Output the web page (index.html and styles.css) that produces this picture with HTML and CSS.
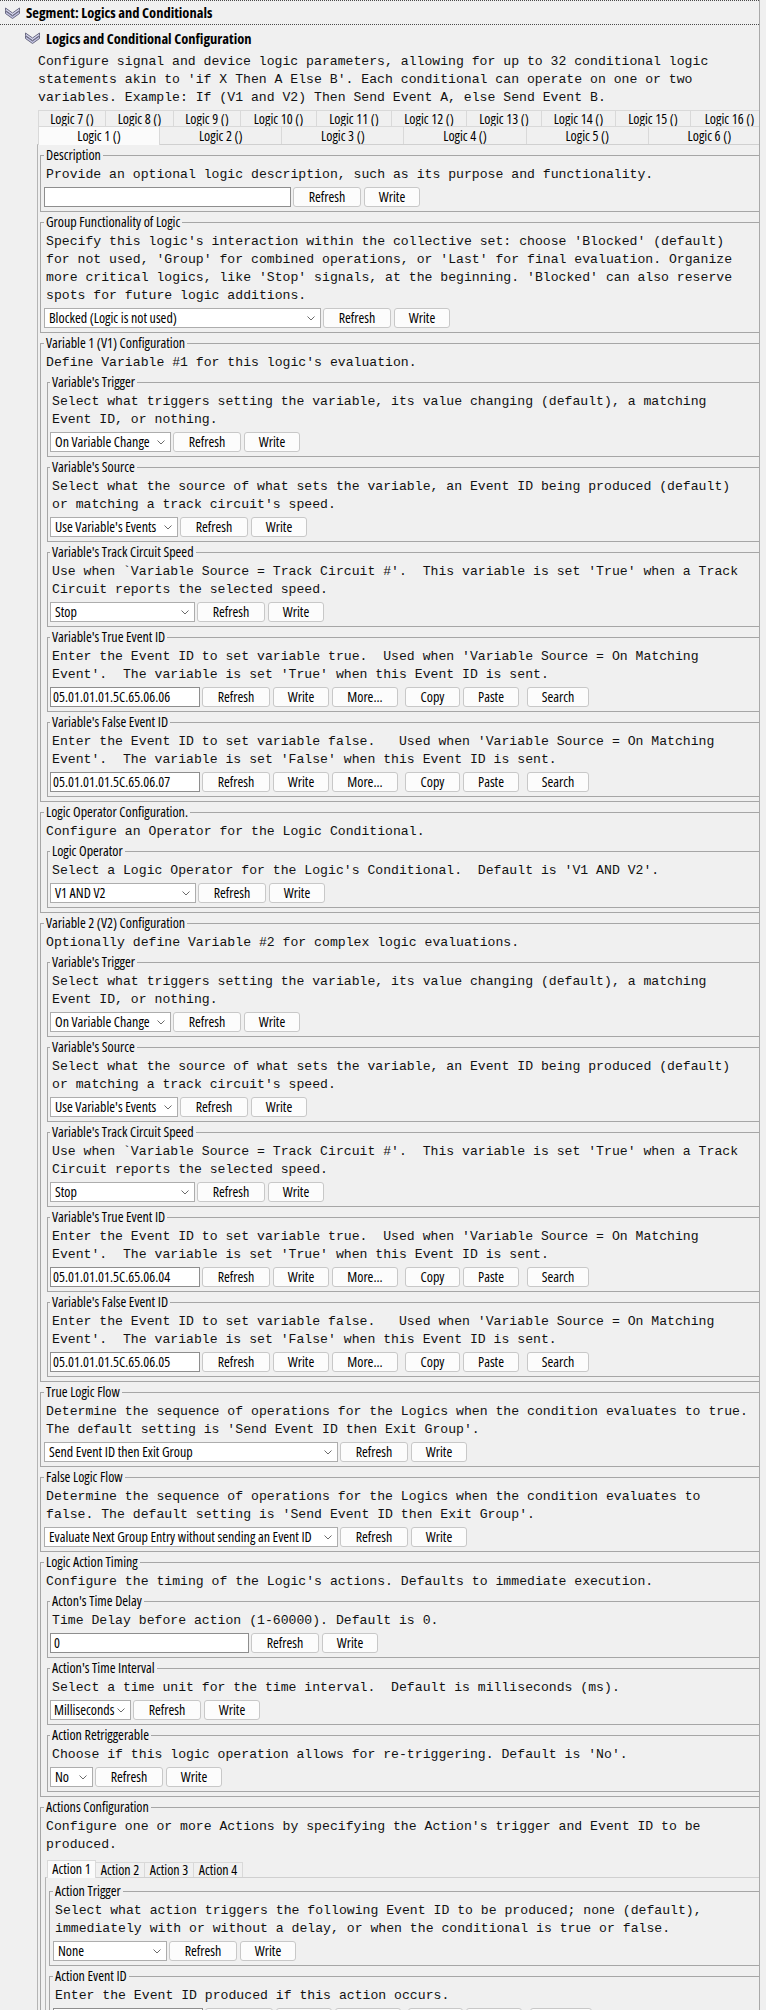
FILE: index.html
```html
<!DOCTYPE html>
<html>
<head>
<meta charset="utf-8">
<link rel="stylesheet" href="styles.css">
</head>
<body>
<div class="viewport">
  <div class="seg-head">
    <svg class="chev" width="17" height="12" viewBox="0 0 17 12"><path d="M1.5 1 L8.5 6 L15.5 1 L15.5 3.5 L8.5 8.5 L1.5 3.5Z" fill="#d6d6ee" stroke="#6a6a82" stroke-width="1" stroke-linejoin="round"/><path d="M1.5 4 L8.5 9 L15.5 4 L15.5 6.5 L8.5 11.5 L1.5 6.5Z" fill="#c4c4e4" stroke="#6a6a82" stroke-width="1" stroke-linejoin="round"/></svg>
    <span>Segment: Logics and Conditionals</span>
  </div>
  <div class="sub-head">
    <svg class="chev" width="17" height="12" viewBox="0 0 17 12"><path d="M1.5 1 L8.5 6 L15.5 1 L15.5 3.5 L8.5 8.5 L1.5 3.5Z" fill="#d6d6ee" stroke="#6a6a82" stroke-width="1" stroke-linejoin="round"/><path d="M1.5 4 L8.5 9 L15.5 4 L15.5 6.5 L8.5 11.5 L1.5 6.5Z" fill="#c4c4e4" stroke="#6a6a82" stroke-width="1" stroke-linejoin="round"/></svg>
    <span>Logics and Conditional Configuration</span>
  </div>
  <div class="txt intro">Configure signal and device logic parameters, allowing for up to 32 conditional logic
statements akin to 'if X Then A Else B'. Each conditional can operate on one or two
variables. Example: If (V1 and V2) Then Send Event A, else Send Event B.</div>

  <div class="tabpane">
    <div class="tabs-back">
      <div class="tab">Logic 7 ()</div><div class="tab">Logic 8 ()</div><div class="tab">Logic 9 ()</div><div class="tab">Logic 10 ()</div><div class="tab">Logic 11 ()</div><div class="tab">Logic 12 ()</div><div class="tab">Logic 13 ()</div><div class="tab">Logic 14 ()</div><div class="tab">Logic 15 ()</div><div class="tab">Logic 16 ()</div>
    </div>
    <div class="tabs-front">
      <div class="tab sel">Logic 1 ()</div><div class="tab">Logic 2 ()</div><div class="tab">Logic 3 ()</div><div class="tab">Logic 4 ()</div><div class="tab">Logic 5 ()</div><div class="tab">Logic 6 ()</div>
    </div>
    <div class="panel">

      <fieldset class="grp">
        <legend>Description</legend>
        <div class="txt">Provide an optional logic description, such as its purpose and functionality.</div>
        <div class="row"><div class="field w-desc"></div><div class="btn refresh">Refresh</div><div class="btn write">Write</div></div>
      </fieldset>

      <fieldset class="grp">
        <legend>Group Functionality of Logic</legend>
        <div class="txt">Specify this logic's interaction within the collective set: choose 'Blocked' (default)
for not used, 'Group' for combined operations, or 'Last' for final evaluation. Organize
more critical logics, like 'Stop' signals, at the beginning. 'Blocked' can also reserve
spots for future logic additions.</div>
        <div class="row"><div class="combo w-group"><span>Blocked (Logic is not used)</span><svg class="arr" width="8" height="5" viewBox="0 0 8 5"><path d="M0.5 0.5 L4 4 L7.5 0.5" fill="none" stroke="#6b6b6b"/></svg></div><div class="btn refresh">Refresh</div><div class="btn write">Write</div></div>
      </fieldset>

      <fieldset class="grp">
        <legend>Variable 1 (V1) Configuration</legend>
        <div class="txt">Define Variable #1 for this logic's evaluation.</div>
        <fieldset class="grp in">
          <legend>Variable's Trigger</legend>
          <div class="txt">Select what triggers setting the variable, its value changing (default), a matching
Event ID, or nothing.</div>
          <div class="row"><div class="combo w-trig"><span>On Variable Change</span><svg class="arr" width="8" height="5" viewBox="0 0 8 5"><path d="M0.5 0.5 L4 4 L7.5 0.5" fill="none" stroke="#6b6b6b"/></svg></div><div class="btn refresh">Refresh</div><div class="btn write">Write</div></div>
        </fieldset>
        <fieldset class="grp in">
          <legend>Variable's Source</legend>
          <div class="txt">Select what the source of what sets the variable, an Event ID being produced (default)
or matching a track circuit's speed.</div>
          <div class="row"><div class="combo w-src"><span>Use Variable's Events</span><svg class="arr" width="8" height="5" viewBox="0 0 8 5"><path d="M0.5 0.5 L4 4 L7.5 0.5" fill="none" stroke="#6b6b6b"/></svg></div><div class="btn refresh">Refresh</div><div class="btn write">Write</div></div>
        </fieldset>
        <fieldset class="grp in">
          <legend>Variable's Track Circuit Speed</legend>
          <div class="txt">Use when `Variable Source = Track Circuit #'.  This variable is set 'True' when a Track
Circuit reports the selected speed.</div>
          <div class="row"><div class="combo w-speed"><span>Stop</span><svg class="arr" width="8" height="5" viewBox="0 0 8 5"><path d="M0.5 0.5 L4 4 L7.5 0.5" fill="none" stroke="#6b6b6b"/></svg></div><div class="btn refresh">Refresh</div><div class="btn write">Write</div></div>
        </fieldset>
        <fieldset class="grp in">
          <legend>Variable's True Event ID</legend>
          <div class="txt">Enter the Event ID to set variable true.  Used when 'Variable Source = On Matching
Event'.  The variable is set 'True' when this Event ID is sent.</div>
          <div class="row"><div class="field w-id">05.01.01.01.5C.65.06.06</div><div class="btn refresh">Refresh</div><div class="btn write">Write</div><div class="btn more">More...</div><div class="btn copy">Copy</div><div class="btn paste">Paste</div><div class="btn search">Search</div></div>
        </fieldset>
        <fieldset class="grp in">
          <legend>Variable's False Event ID</legend>
          <div class="txt">Enter the Event ID to set variable false.   Used when 'Variable Source = On Matching
Event'.  The variable is set 'False' when this Event ID is sent.</div>
          <div class="row"><div class="field w-id">05.01.01.01.5C.65.06.07</div><div class="btn refresh">Refresh</div><div class="btn write">Write</div><div class="btn more">More...</div><div class="btn copy">Copy</div><div class="btn paste">Paste</div><div class="btn search">Search</div></div>
        </fieldset>
      </fieldset>

      <fieldset class="grp">
        <legend>Logic Operator Configuration.</legend>
        <div class="txt">Configure an Operator for the Logic Conditional.</div>
        <fieldset class="grp in">
          <legend>Logic Operator</legend>
          <div class="txt">Select a Logic Operator for the Logic's Conditional.  Default is 'V1 AND V2'.</div>
          <div class="row"><div class="combo w-op"><span>V1 AND V2</span><svg class="arr" width="8" height="5" viewBox="0 0 8 5"><path d="M0.5 0.5 L4 4 L7.5 0.5" fill="none" stroke="#6b6b6b"/></svg></div><div class="btn refresh">Refresh</div><div class="btn write">Write</div></div>
        </fieldset>
      </fieldset>

      <fieldset class="grp">
        <legend>Variable 2 (V2) Configuration</legend>
        <div class="txt">Optionally define Variable #2 for complex logic evaluations.</div>
        <fieldset class="grp in">
          <legend>Variable's Trigger</legend>
          <div class="txt">Select what triggers setting the variable, its value changing (default), a matching
Event ID, or nothing.</div>
          <div class="row"><div class="combo w-trig"><span>On Variable Change</span><svg class="arr" width="8" height="5" viewBox="0 0 8 5"><path d="M0.5 0.5 L4 4 L7.5 0.5" fill="none" stroke="#6b6b6b"/></svg></div><div class="btn refresh">Refresh</div><div class="btn write">Write</div></div>
        </fieldset>
        <fieldset class="grp in">
          <legend>Variable's Source</legend>
          <div class="txt">Select what the source of what sets the variable, an Event ID being produced (default)
or matching a track circuit's speed.</div>
          <div class="row"><div class="combo w-src"><span>Use Variable's Events</span><svg class="arr" width="8" height="5" viewBox="0 0 8 5"><path d="M0.5 0.5 L4 4 L7.5 0.5" fill="none" stroke="#6b6b6b"/></svg></div><div class="btn refresh">Refresh</div><div class="btn write">Write</div></div>
        </fieldset>
        <fieldset class="grp in">
          <legend>Variable's Track Circuit Speed</legend>
          <div class="txt">Use when `Variable Source = Track Circuit #'.  This variable is set 'True' when a Track
Circuit reports the selected speed.</div>
          <div class="row"><div class="combo w-speed"><span>Stop</span><svg class="arr" width="8" height="5" viewBox="0 0 8 5"><path d="M0.5 0.5 L4 4 L7.5 0.5" fill="none" stroke="#6b6b6b"/></svg></div><div class="btn refresh">Refresh</div><div class="btn write">Write</div></div>
        </fieldset>
        <fieldset class="grp in">
          <legend>Variable's True Event ID</legend>
          <div class="txt">Enter the Event ID to set variable true.  Used when 'Variable Source = On Matching
Event'.  The variable is set 'True' when this Event ID is sent.</div>
          <div class="row"><div class="field w-id">05.01.01.01.5C.65.06.04</div><div class="btn refresh">Refresh</div><div class="btn write">Write</div><div class="btn more">More...</div><div class="btn copy">Copy</div><div class="btn paste">Paste</div><div class="btn search">Search</div></div>
        </fieldset>
        <fieldset class="grp in">
          <legend>Variable's False Event ID</legend>
          <div class="txt">Enter the Event ID to set variable false.   Used when 'Variable Source = On Matching
Event'.  The variable is set 'False' when this Event ID is sent.</div>
          <div class="row"><div class="field w-id">05.01.01.01.5C.65.06.05</div><div class="btn refresh">Refresh</div><div class="btn write">Write</div><div class="btn more">More...</div><div class="btn copy">Copy</div><div class="btn paste">Paste</div><div class="btn search">Search</div></div>
        </fieldset>
      </fieldset>

      <fieldset class="grp">
        <legend>True Logic Flow</legend>
        <div class="txt">Determine the sequence of operations for the Logics when the condition evaluates to true.
The default setting is 'Send Event ID then Exit Group'.</div>
        <div class="row"><div class="combo w-flow"><span>Send Event ID then Exit Group</span><svg class="arr" width="8" height="5" viewBox="0 0 8 5"><path d="M0.5 0.5 L4 4 L7.5 0.5" fill="none" stroke="#6b6b6b"/></svg></div><div class="btn refresh">Refresh</div><div class="btn write">Write</div></div>
      </fieldset>

      <fieldset class="grp">
        <legend>False Logic Flow</legend>
        <div class="txt">Determine the sequence of operations for the Logics when the condition evaluates to
false. The default setting is 'Send Event ID then Exit Group'.</div>
        <div class="row"><div class="combo w-flow"><span>Evaluate Next Group Entry without sending an Event ID</span><svg class="arr" width="8" height="5" viewBox="0 0 8 5"><path d="M0.5 0.5 L4 4 L7.5 0.5" fill="none" stroke="#6b6b6b"/></svg></div><div class="btn refresh">Refresh</div><div class="btn write">Write</div></div>
      </fieldset>

      <fieldset class="grp">
        <legend>Logic Action Timing</legend>
        <div class="txt">Configure the timing of the Logic's actions. Defaults to immediate execution.</div>
        <fieldset class="grp in">
          <legend>Acton's Time Delay</legend>
          <div class="txt">Time Delay before action (1-60000). Default is 0.</div>
          <div class="row"><div class="field w-delay">0</div><div class="btn refresh">Refresh</div><div class="btn write">Write</div></div>
        </fieldset>
        <fieldset class="grp in">
          <legend>Action's Time Interval</legend>
          <div class="txt">Select a time unit for the time interval.  Default is milliseconds (ms).</div>
          <div class="row"><div class="combo w-unit"><span>Milliseconds</span><svg class="arr" width="8" height="5" viewBox="0 0 8 5"><path d="M0.5 0.5 L4 4 L7.5 0.5" fill="none" stroke="#6b6b6b"/></svg></div><div class="btn refresh">Refresh</div><div class="btn write">Write</div></div>
        </fieldset>
        <fieldset class="grp in">
          <legend>Action Retriggerable</legend>
          <div class="txt">Choose if this logic operation allows for re-triggering. Default is 'No'.</div>
          <div class="row"><div class="combo w-no"><span>No</span><svg class="arr" width="8" height="5" viewBox="0 0 8 5"><path d="M0.5 0.5 L4 4 L7.5 0.5" fill="none" stroke="#6b6b6b"/></svg></div><div class="btn refresh">Refresh</div><div class="btn write">Write</div></div>
        </fieldset>
      </fieldset>

      <fieldset class="grp">
        <legend>Actions Configuration</legend>
        <div class="txt">Configure one or more Actions by specifying the Action's trigger and Event ID to be
produced.</div>
        <div class="subpane">
          <div class="subtabs">
            <div class="stab sel">Action 1</div><div class="stab">Action 2</div><div class="stab">Action 3</div><div class="stab">Action 4</div>
          </div>
          <div class="subpanel">
            <fieldset class="grp in act">
              <legend>Action Trigger</legend>
              <div class="txt">Select what action triggers the following Event ID to be produced; none (default),
immediately with or without a delay, or when the conditional is true or false.</div>
              <div class="row"><div class="combo w-act"><span>None</span><svg class="arr" width="8" height="5" viewBox="0 0 8 5"><path d="M0.5 0.5 L4 4 L7.5 0.5" fill="none" stroke="#6b6b6b"/></svg></div><div class="btn refresh">Refresh</div><div class="btn write">Write</div></div>
            </fieldset>
            <fieldset class="grp in act">
              <legend>Action Event ID</legend>
              <div class="txt">Enter the Event ID produced if this action occurs.</div>
              <div class="row"><div class="field w-id">05.01.01.01.5C.65.06.08</div><div class="btn refresh">Refresh</div><div class="btn write">Write</div><div class="btn more">More...</div><div class="btn copy">Copy</div><div class="btn paste">Paste</div><div class="btn search">Search</div></div>
            </fieldset>
          </div>
        </div>
      </fieldset>

    </div>
  </div>
</div>
</body>
</html>
```
FILE: styles.css
```css
* { box-sizing: border-box; }
html, body { margin: 0; padding: 0; background: #f0f0f0; }
body {
  width: 766px;
  height: 2010px;
  overflow: hidden;
  font-family: "Open Sans", "Liberation Sans", sans-serif;
  font-stretch: 75%;
  font-size: 14px;
  color: #000;
}
.viewport {
  width: 760px;
  height: 2010px;
  overflow: hidden;
  border-right: 1px solid #a9a9a9;
}
.seg-head {
  height: 25px;
  border-top: 1px dotted #4a4a4a;
  border-bottom: 1px dotted #4a4a4a;
  display: flex;
  align-items: center;
  padding-left: 4px;
  font-weight: bold;
  font-size: 14.5px;
}
.sub-head {
  height: 26px;
  display: flex;
  align-items: center;
  padding-left: 24px;
  font-weight: bold;
  font-size: 14.5px;
}
.chev { margin-right: 5px; flex: none; }

.txt {
  font-family: "Liberation Mono", "Courier New", monospace;
  font-stretch: normal;
  font-size: 13.15px;
  line-height: 18px;
  white-space: pre;
  padding-left: 2px;
  color: #111;
}
.intro { margin-top: 2px; padding-left: 38px; }

/* main tabbed pane */
.tabpane {
  margin-left: 37px;
  margin-top: 3px;
  width: 734px;
}
.tabs-back {
  display: grid;
  grid-template-columns: 68px 68px 67px 76px 75px 75px 75px 74px 75px 78px;
  height: 16px;
  margin-left: 1px;
}
.tabs-front {
  display: grid;
  grid-template-columns: repeat(6, 1fr);
  height: 18px;
  margin-left: 1px;
  align-items: end;
}
.tab {
  border-top: 1px solid #d9d9d9;
  border-right: 1px solid #d9d9d9;
  display: flex;
  align-items: center;
  justify-content: center;
  height: 100%;
  background: #f0f0f0;
  line-height: 14px;
  white-space: nowrap;
}
.tab:first-child { border-left: 1px solid #d9d9d9; }
.tabs-front .tab { height: 18px; }
.tabs-front .tab.sel {
  background: #fbfbfb;
  height: 19px;
  margin-bottom: -1px;
  position: relative;
  z-index: 1;
  padding-bottom: 1px;
}
.panel {
  border-top: 1px solid #d0d0d0;
  border-left: 1px solid #b4b4b4;
  padding: 3px 0 0 2px;
}

/* titled borders */
.grp {
  margin: 3px 0 0 0;
  padding: 4px 0 4px 3px;
  border: 1px solid #a6a6a6;
  min-width: 0;
}
.panel > .grp:first-child { margin-top: 0; }
.grp > legend {
  font-size: 14px;
  line-height: 14px;
  height: 14px;
  padding: 0 2px;
  margin-left: 0;
  color: #000;
  white-space: nowrap;
}
.grp.in { margin-left: 3px; padding-left: 2px; }
.grp.act { margin-left: 0; padding-left: 3px; }

/* controls */
.row {
  display: flex;
  height: 20px;
  margin-top: 3px;
}
.field, .combo, .btn {
  height: 20px;
  flex: none;
  display: flex;
  align-items: center;
  font-size: 14px;
  line-height: 18px;
  white-space: nowrap;
}
.field {
  background: #fff;
  border: 1px solid #8e8e8e;
  padding-left: 2px;
}
.combo {
  background: #fff;
  border: 1px solid #adadad;
  padding-left: 4px;
}
.combo span { flex: 1; white-space: nowrap; }
.combo .arr { flex: none; margin: 0 5px 0 2px; }
.btn {
  justify-content: center;
  background: #fcfcfc;
  border: 1px solid #c8c8c8;
  border-radius: 3px;
}
.refresh { width: 68px; margin-left: 2px; }
.write { width: 56px; margin-left: 3px; }
.more { width: 66px; margin-left: 3px; }
.copy { width: 55px; margin-left: 7px; }
.paste { width: 56px; margin-left: 3px; }
.search { width: 62px; margin-left: 8px; }

.w-desc { width: 247px; }
.w-group { width: 277px; }
.w-trig { width: 121px; }
.w-src { width: 128px; }
.w-speed { width: 145px; }
.w-id { width: 150px; }
.w-op { width: 146px; }
.w-flow { width: 294px; }
.w-delay { width: 199px; padding-left: 3px; }
.w-unit { width: 81px; padding-left: 3px; }
.w-no { width: 43px; }
.w-act { width: 114px; }

/* action sub-tabs */
.subpane { margin-top: 6px; margin-left: 1px; }
.subtabs {
  display: flex;
  align-items: flex-end;
  height: 17px;
  padding-left: 2px;
}
.stab {
  width: 49px;
  height: 15px;
  border-top: 1px solid #d9d9d9;
  border-right: 1px solid #d9d9d9;
  display: flex;
  align-items: center;
  justify-content: center;
  line-height: 14px;
  white-space: nowrap;
}
.stab:first-child { border-left: 1px solid #d9d9d9; }
.stab.sel {
  height: 18px;
  margin-bottom: -1px;
  background: #fbfbfb;
  position: relative;
  z-index: 1;
  padding-bottom: 2px;
}
.subpanel {
  border-top: 1px solid #d0d0d0;
  border-left: 1px solid #b4b4b4;
  padding: 3px 0 0 3px;
}
```
